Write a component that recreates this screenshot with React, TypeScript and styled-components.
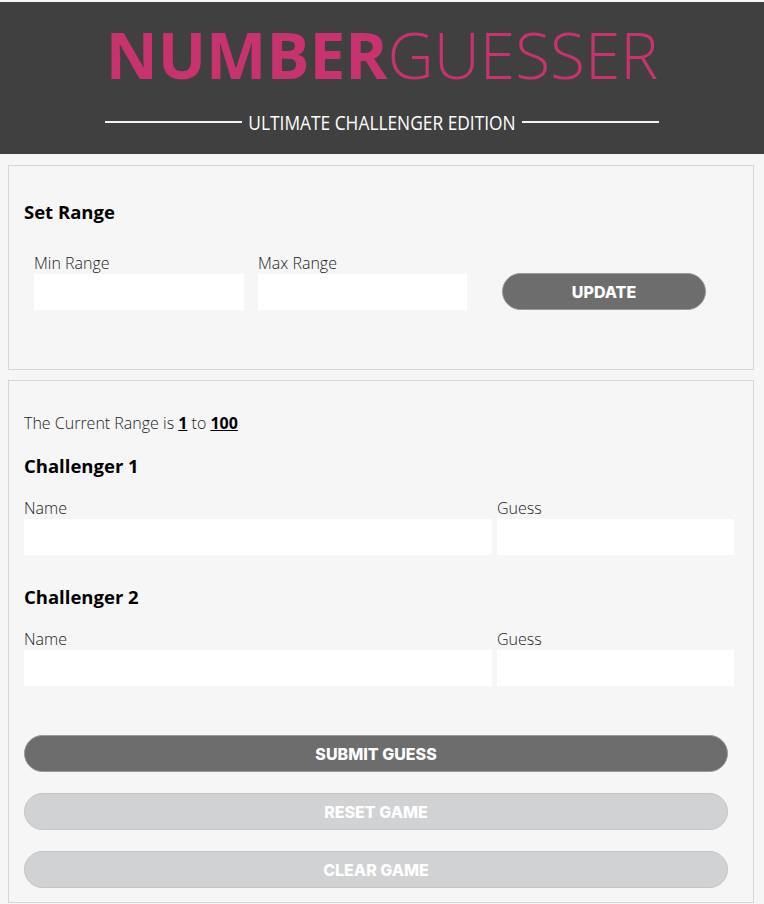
import React from "react";
import styled, { createGlobalStyle } from "styled-components";

const Global = createGlobalStyle`
  html, body { margin: 0; padding: 0; }
  body {
    background: #f6f6f6;
    font-family: "Open Sans", "Liberation Sans", sans-serif;
    color: #111;
  }
  * { box-sizing: border-box; }
`;

const Page = styled.div`
  padding-top: 2px;
  background: #f6f6f6;
`;

const Header = styled.header`
  background: #404040;
  height: 152px;
  display: flex;
  flex-direction: column;
  align-items: center;
`;

const Title = styled.h1`
  margin: 15px 0 0;
  font-size: 64px;
  line-height: 76px;
  color: #c8326e;
  letter-spacing: 0;
  font-weight: 300;
`;

const Strong = styled.span`
  font-weight: 700;
`;

const SubRow = styled.div`
  margin-top: 18px;
  display: flex;
  align-items: center;
  gap: 6px;
  color: #fff;
`;

const Rule = styled.span`
  display: block;
  width: 137px;
  height: 2px;
  background: #f2f2f2;
`;

const Subtitle = styled.span`
  font-size: 17.35px;
  line-height: 22px;
  font-weight: 400;
  transform: scaleY(1.12);
`;

const Panel = styled.section<{ $top: number; $pad: string }>`
  margin: ${(p) => p.$top}px 10px 0 8px;
  border: 1px solid #d6d6d6;
  background: #f6f6f6;
  padding: ${(p) => p.$pad};
`;

const Heading = styled.h2`
  margin: 0;
  font-size: 18.5px;
  line-height: 24px;
  font-weight: 700;
  color: #000;
`;

const RangeRow = styled.div`
  display: flex;
  align-items: flex-end;
  margin: 28px 0 0 10px;
`;

const Field = styled.label<{ $w: number; $gap?: number }>`
  display: flex;
  flex-direction: column;
  width: ${(p) => p.$w}px;
  margin-right: ${(p) => p.$gap ?? 0}px;
`;

const LabelText = styled.span`
  font-size: 16px;
  line-height: 22px;
  font-weight: 300;
  color: #222;
`;

const Input = styled.input`
  display: block;
  width: 100%;
  height: 36px;
  border: none;
  outline: none;
  background: #fff;
  margin: 0;
  padding: 0 8px;
  font-family: inherit;
  font-size: 15px;
`;

const Button = styled.button<{ $active: boolean; $w: string }>`
  display: block;
  width: ${(p) => p.$w};
  height: 37px;
  border-radius: 19px;
  border: 1px solid ${(p) => (p.$active ? "#9a9a9a" : "#c4c4c6")};
  background: ${(p) => (p.$active ? "#6d6d6d" : "#d1d2d4")};
  color: #fff;
  font-family: Inter, "Roboto", sans-serif;
  font-weight: 800;
  font-size: 16px;
  letter-spacing: 0;
  padding: 0;
  cursor: pointer;
`;

const UpdateWrap = styled.div`
  margin-left: 35px;
`;

const RangeText = styled.p`
  margin: 0;
  font-size: 16px;
  line-height: 22px;
  font-weight: 300;
  color: #222;
`;

const Num = styled.span`
  font-weight: 700;
  text-decoration: underline;
  color: #000;
`;

const Challenger = styled.div<{ $top: number }>`
  margin-top: ${(p) => p.$top}px;
`;

const GuessRow = styled.div`
  display: flex;
  margin-top: 19px;
`;

const Buttons = styled.div`
  display: flex;
  flex-direction: column;
  gap: 21px;
  margin-top: 49px;
`;

function ChallengerBlock({ n, top }: { n: number; top: number }) {
  return (
    <Challenger $top={top}>
      <Heading>Challenger {n}</Heading>
      <GuessRow>
        <Field $w={468} $gap={5}>
          <LabelText>Name</LabelText>
          <Input />
        </Field>
        <Field $w={237}>
          <LabelText>Guess</LabelText>
          <Input />
        </Field>
      </GuessRow>
    </Challenger>
  );
}

export default function App() {
  return (
    <Page>
      <Global />
      <Header>
        <Title>
          <Strong>NUMBER</Strong>GUESSER
        </Title>
        <SubRow>
          <Rule />
          <Subtitle>ULTIMATE CHALLENGER EDITION</Subtitle>
          <Rule />
        </SubRow>
      </Header>
      <Panel $top={11} $pad="34px 15px 59px">
        <Heading>Set Range</Heading>
        <RangeRow>
          <Field $w={210} $gap={14}>
            <LabelText>Min Range</LabelText>
            <Input />
          </Field>
          <Field $w={209}>
            <LabelText>Max Range</LabelText>
            <Input />
          </Field>
          <UpdateWrap>
            <Button $active $w="204px">UPDATE</Button>
          </UpdateWrap>
        </RangeRow>
      </Panel>
      <Panel $top={10} $pad="31px 15px 14px">
        <RangeText>
          The Current Range is <Num>1</Num> to <Num>100</Num>
        </RangeText>
        <ChallengerBlock n={1} top={20} />
        <ChallengerBlock n={2} top={30} />
        <Buttons>
          <Button $active $w="704px">SUBMIT GUESS</Button>
          <Button $active={false} $w="704px">RESET GAME</Button>
          <Button $active={false} $w="704px">CLEAR GAME</Button>
        </Buttons>
      </Panel>
    </Page>
  );
}
